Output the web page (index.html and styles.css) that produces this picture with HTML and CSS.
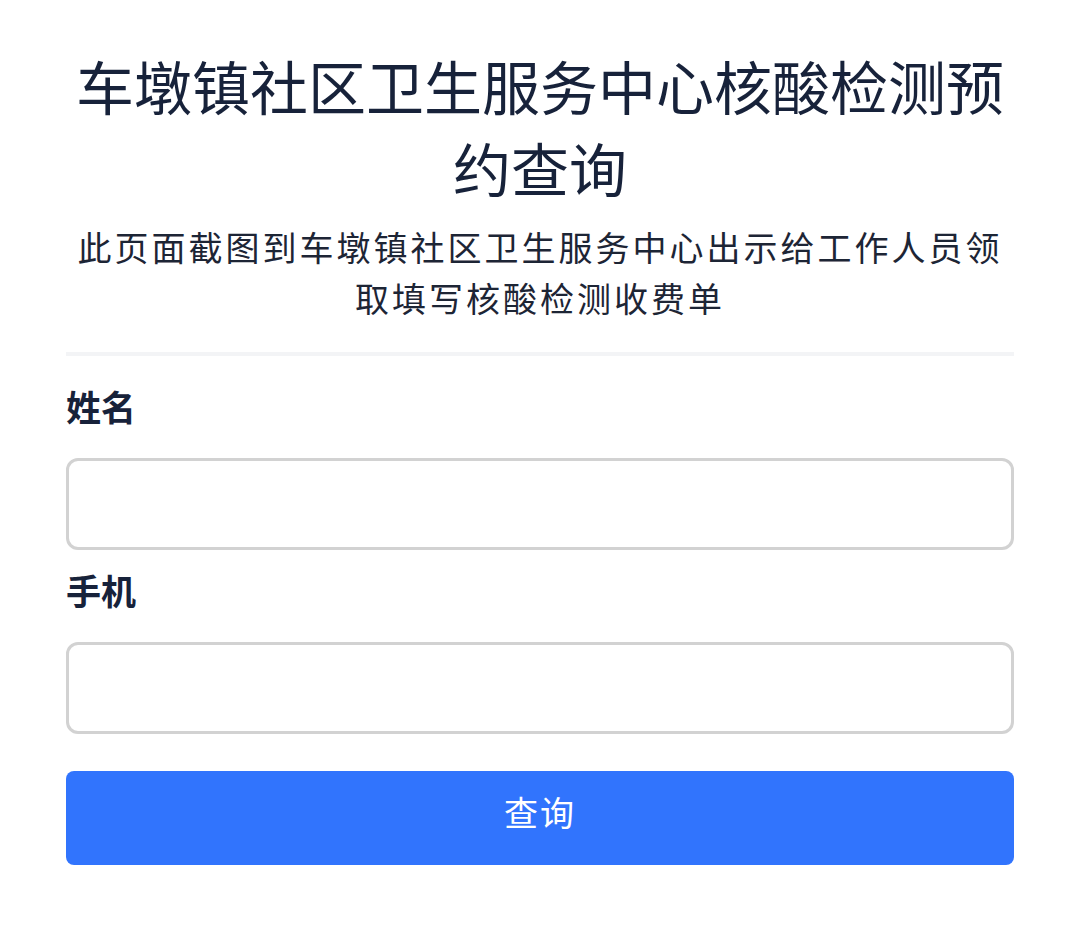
FILE: index.html
```html
<!DOCTYPE html>
<html lang="zh-CN">

<head>
    <meta charset="UTF-8">
    <meta name="viewport" content="width=device-width, initial-scale=1.0">
    <title>核酸检测预约查询</title>
    <link rel="stylesheet" href="styles.css">
</head>

<body>

    <div class="page">
        <div class="header">
            <h1 class="title">车墩镇社区卫生服务中心核酸检测预约查询</h1>
            <p class="subtitle">此页面截图到车墩镇社区卫生服务中心出示给工作人员领取填写核酸检测收费单</p>
        </div>

        <hr class="divider">

        <form class="form">
            <label class="label" for="name">姓名</label>
            <input class="input" id="name" type="text">

            <label class="label" for="phone">手机</label>
            <input class="input" id="phone" type="tel">

            <button class="btn" type="button">查询</button>
        </form>
    </div>

</body>

</html>
```

FILE: styles.css
```css
* {
    box-sizing: border-box;
}

body {
    margin: 0;
    background-color: #fff;
    font-family: "Noto Sans CJK SC", "Noto Sans", sans-serif;
    color: #17223a;
}

.page {
    padding: 44px 66px 0;
}

.header {
    display: flex;
    flex-direction: column;
    align-items: center;
    gap: 13px;
    text-align: center;
}

.title {
    margin: 0;
    font-size: 58px;
    font-weight: 400;
    line-height: 82px;
    padding: 0 4px;
}

.subtitle {
    margin: 0;
    font-size: 34px;
    line-height: 51px;
    letter-spacing: 3px;
    color: #1d2535;
    padding: 0 6px;
}

.divider {
    margin: 29px 0 0;
    border: none;
    height: 4px;
    background-color: #f3f4f6;
}

.form {
    display: flex;
    flex-direction: column;
    padding-top: 26px;
}

.label {
    font-size: 35px;
    font-weight: 700;
    line-height: 48px;
    margin-bottom: 28px;
}

.input {
    height: 92px;
    border: 3px solid #d2d2d2;
    border-radius: 12px;
    margin-bottom: 16px;
    font-size: 34px;
    padding: 0 20px;
    outline: none;
}

.btn {
    height: 94px;
    margin-top: 21px;
    padding: 0 0 14px;
    border: none;
    border-radius: 8px;
    background-color: #3174fd;
    color: #fff;
    font-family: inherit;
    font-size: 34px;
    letter-spacing: 2px;
}
```
